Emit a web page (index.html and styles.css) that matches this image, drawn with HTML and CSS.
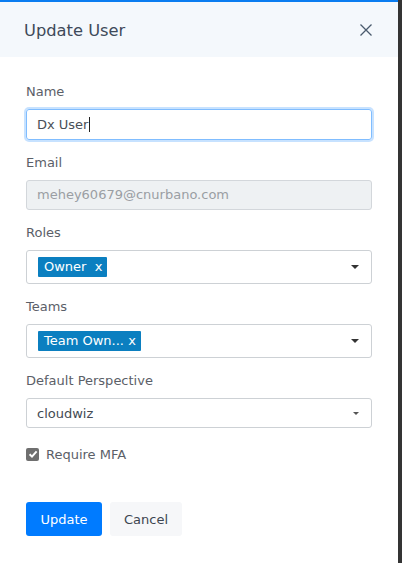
FILE: index.html
```html
<!DOCTYPE html>
<html>
<head>
<meta charset="utf-8">
<link rel="stylesheet" href="styles.css">
</head>
<body>
<div class="screen">
  <div class="panel">
    <div class="header">
      <h1 class="title">Update User</h1>
      <svg class="close" width="12" height="12" viewBox="0 0 12 12"><path d="M0.5 0.5 L11.5 11.5 M11.5 0.5 L0.5 11.5" stroke="#4a5b6e" stroke-width="1.3" fill="none"/></svg>
    </div>
    <div class="body">
      <div class="group">
        <div class="label">Name</div>
        <div class="input focus">Dx User<span class="cursor"></span></div>
      </div>
      <div class="group">
        <div class="label">Email</div>
        <div class="input disabled">mehey60679@cnurbano.com</div>
      </div>
      <div class="group">
        <div class="label">Roles</div>
        <div class="select multi">
          <span class="tag">Owner&nbsp;&nbsp;x</span>
          <span class="caret"></span>
        </div>
      </div>
      <div class="group">
        <div class="label">Teams</div>
        <div class="select multi">
          <span class="tag">Team Own...&nbsp;x</span>
          <span class="caret"></span>
        </div>
      </div>
      <div class="group">
        <div class="label">Default Perspective</div>
        <div class="select single">
          <span class="value">cloudwiz</span>
          <span class="caret small"></span>
        </div>
      </div>
      <div class="check-row">
        <span class="checkbox"><svg width="12" height="12" viewBox="0 0 12 12"><path d="M2.6 6.2 L5 8.6 L9.6 3.4" stroke="#fff" stroke-width="2" fill="none"/></svg></span>
        <span class="check-label">Require MFA</span>
      </div>
      <div class="actions">
        <button class="btn primary">Update</button>
        <button class="btn secondary">Cancel</button>
      </div>
    </div>
  </div>
  <div class="edge"></div>
</div>
</body>
</html>
```

FILE: styles.css
```css
* { box-sizing: border-box; }
html, body { margin: 0; padding: 0; }
body {
  font-family: "DejaVu Sans", "Open Sans", sans-serif;
  background: #fff;
}
.screen {
  display: flex;
  width: 402px;
  height: 563px;
  overflow: hidden;
}
.panel {
  width: 398px;
  height: 563px;
  border-top: 2px solid #0a7cf0;
  background: #fff;
}
.edge {
  width: 4px;
  background: #343434;
}
.header {
  height: 55px;
  background: #f4f8fc;
  display: flex;
  align-items: center;
  justify-content: space-between;
  padding: 1px 26px 0 24px;
}
.title {
  margin: 0;
  font-weight: normal;
  font-size: 16.3px;
  color: #3e4a5a;
}
.close { display: block; }
.body {
  padding: 25px 26px 0 26px;
}
.group { margin-bottom: 13px; }
.label {
  font-size: 13px;
  line-height: 20px;
  color: #5b6068;
  margin-bottom: 7px;
}
.input {
  height: 31px;
  border: 1px solid #d3d7db;
  border-radius: 3px;
  padding: 0 10px;
  font-size: 13px;
  line-height: 29px;
  color: #495057;
  width: 346px;
}
.input.focus {
  border-color: #80bdff;
  box-shadow: 0 0 0 2px rgba(0, 123, 255, 0.22);
}
.cursor {
  display: inline-block;
  width: 1px;
  height: 15px;
  background: #222;
  vertical-align: middle;
  margin-left: 1px;
  margin-top: -3px;
}
.input.disabled {
  background: #eef1f3;
  color: #9a9ea3;
  height: 30px;
  line-height: 28px;
}
.select {
  width: 346px;
  border: 1px solid #cdd1d5;
  border-radius: 3px;
  display: flex;
  align-items: center;
  justify-content: space-between;
  padding: 0 12px 0 11px;
}
.select.multi { height: 34px; }
.select.single { height: 30px; padding-left: 10px; }
.tag {
  background: #0b7fc0;
  color: #fff;
  font-size: 13px;
  line-height: 20px;
  height: 20px;
  padding: 0 5px 0 6px;
  border-radius: 1px;
}
.value {
  font-size: 13px;
  color: #444a52;
}
.caret {
  width: 0;
  height: 0;
  border-left: 4.5px solid transparent;
  border-right: 4.5px solid transparent;
  border-top: 4.5px solid #333;
}
.caret.small {
  border-left-width: 3px;
  border-right-width: 3px;
  border-top-width: 3.5px;
  border-top-color: #555;
}
.check-row {
  display: flex;
  align-items: center;
  height: 20px;
  margin-top: 16px;
}
.checkbox {
  width: 13px;
  height: 13px;
  background: #6f6f6f;
  border-radius: 2px;
  display: flex;
  align-items: center;
  justify-content: center;
  margin-right: 7px;
}
.checkbox svg { display: block; }
.check-label {
  font-size: 13px;
  color: #5b6068;
}
.actions {
  display: flex;
  gap: 8px;
  margin-top: 38px;
}
.btn {
  font-family: inherit;
  font-size: 13px;
  border: none;
  border-radius: 3px;
  height: 34px;
  cursor: pointer;
}
.btn.primary {
  background: #007bff;
  color: #fff;
  width: 76px;
}
.btn.secondary {
  background: #f6f7f9;
  color: #3d4550;
  width: 72px;
}
```
